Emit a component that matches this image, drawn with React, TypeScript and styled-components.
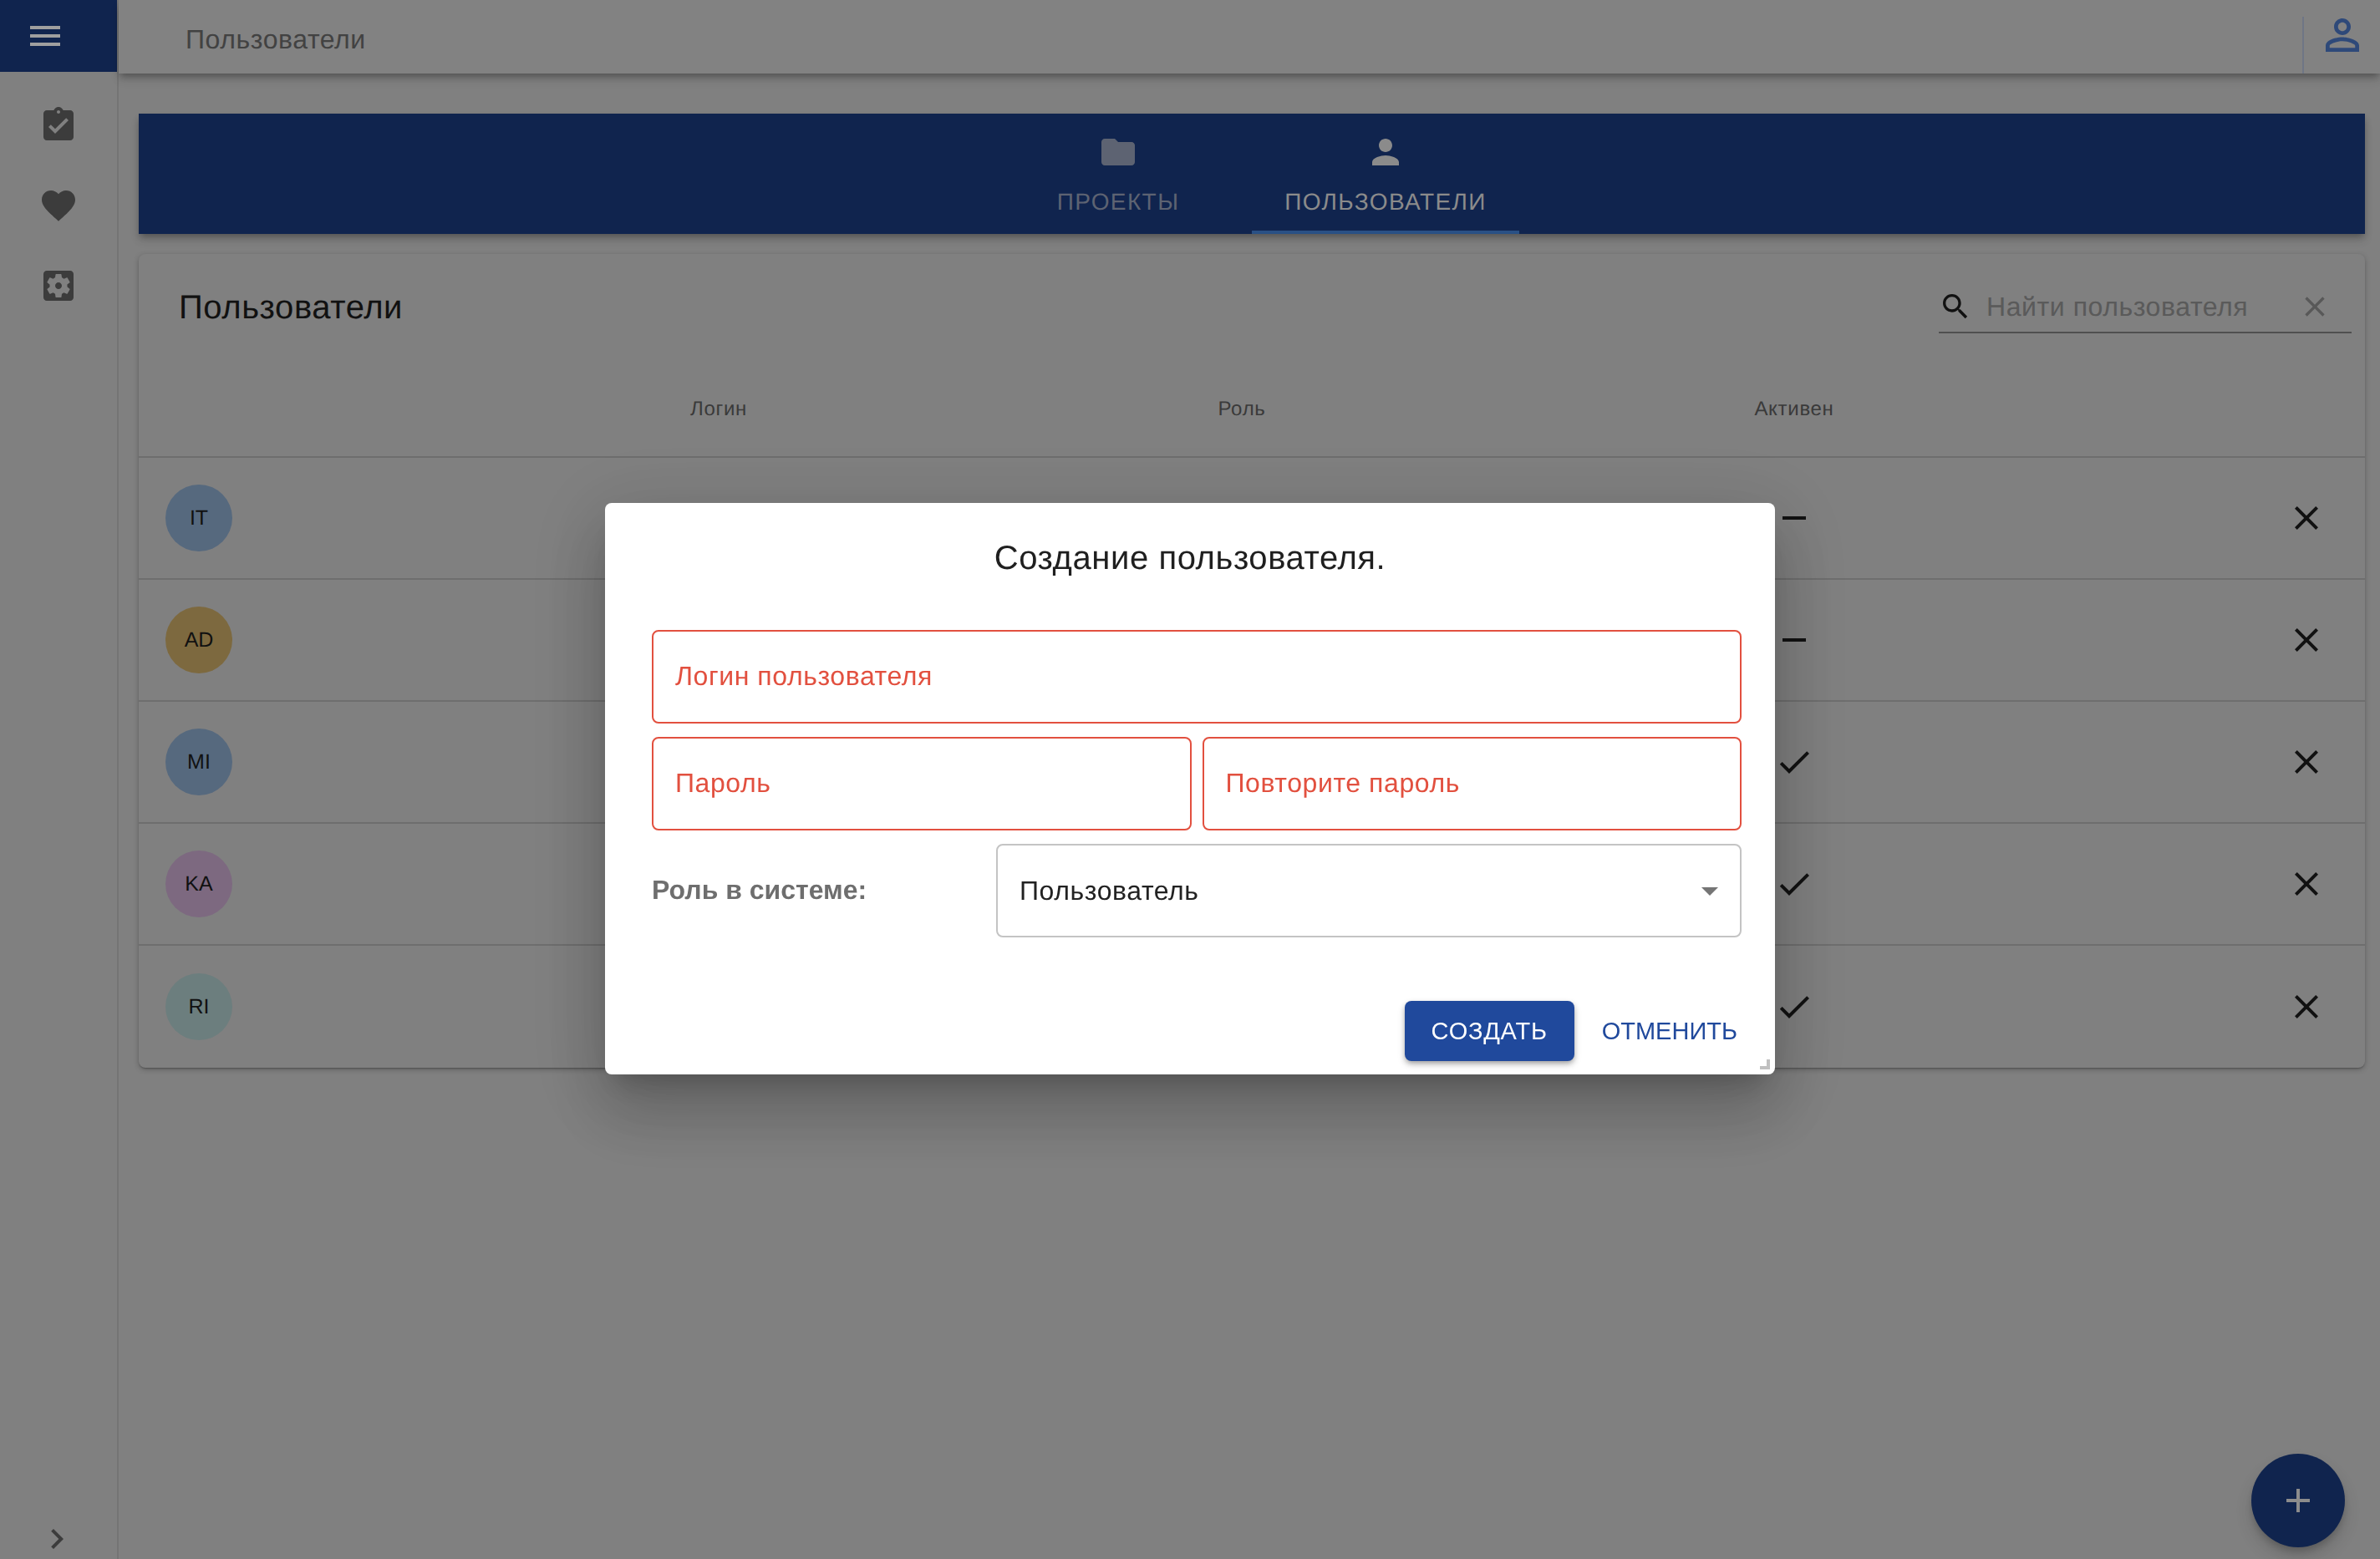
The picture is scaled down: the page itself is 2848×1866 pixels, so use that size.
import React from "react"
import styled, { createGlobalStyle } from "styled-components"

const GlobalStyle = createGlobalStyle`
  html, body {
    margin: 0;
    padding: 0;
    height: 100%;
    overflow: hidden;
    background: #cdcdcd;
    font-family: "Liberation Sans", Arial, sans-serif;
    letter-spacing: 0.036em;
    text-rendering: geometricPrecision;
  }
  * {
    box-sizing: border-box;
  }
`

const PRIMARY = "#1a3a7e"

const Page = styled.div`
  display: flex;
  width: 100vw;
  height: 100vh;
  background: #cdcdcd;
`

const Sidebar = styled.aside`
  display: flex;
  flex-direction: column;
  flex: 0 0 142px;
  height: 100%;
  border-right: 2px solid #bababa;
`

const SidebarHead = styled.div`
  display: flex;
  align-items: center;
  height: 86px;
  padding-left: 30px;
  background: ${PRIMARY};
`

const SideNav = styled.nav`
  display: flex;
  flex-direction: column;
  flex: 1;
  padding-top: 16px;
`

const SideItem = styled.div`
  display: flex;
  align-items: center;
  justify-content: center;
  height: 96px;
`

const SideToggle = styled.div`
  display: flex;
  justify-content: center;
  padding-right: 4px;
`

const Icon = styled.svg<{ $size?: number; $color?: string }>`
  display: block;
  flex: none;
  width: ${(p) => p.$size ?? 48}px;
  height: ${(p) => p.$size ?? 48}px;
  fill: ${(p) => p.$color ?? "#606060"};
`

const Main = styled.main`
  display: flex;
  flex-direction: column;
  flex: 1;
  min-width: 0;
`

const TopBar = styled.header`
  display: flex;
  align-items: center;
  justify-content: space-between;
  height: 88px;
  padding-left: 80px;
  background: #d0d0d0;
  box-shadow: 0 4px 8px -2px rgba(0, 0, 0, 0.3), 0 8px 10px 0 rgba(0, 0, 0, 0.12);
`

const TopTitle = styled.div`
  padding-top: 6px;
  font-size: 32px;
  color: #6b6b6b;
`

const TopUser = styled.div`
  display: flex;
  align-self: stretch;
  align-items: flex-start;
  width: 93px;
  margin-top: 20px;
  padding-left: 16px;
  border-left: 2px solid #b2bed6;
  & > svg {
    margin-top: -8px;
  }
`

const Content = styled.div`
  display: flex;
  flex-direction: column;
  gap: 24px;
  padding: 48px 18px 0 24px;
`

const TabBar = styled.div`
  display: flex;
  justify-content: center;
  height: 144px;
  background: ${PRIMARY};
  box-shadow: 0 4px 8px -2px rgba(0, 0, 0, 0.3), 0 8px 10px 0 rgba(0, 0, 0, 0.12);
`

const Tab = styled.div<{ $active?: boolean }>`
  display: flex;
  flex-direction: column;
  align-items: center;
  width: 320px;
  padding-top: 22px;
  font-size: 28px;
  letter-spacing: 1.4px;
  color: ${(p) => (p.$active ? "#dfdfdf" : "#959fb7")};
  border-bottom: 4px solid ${(p) => (p.$active ? "#4380d5" : "transparent")};
`

const TabLabel = styled.span`
  margin-top: 20px;
`

const Card = styled.section`
  border-radius: 8px;
  background: #cdcdcd;
  box-shadow: 0 2px 2px -1px rgba(0, 0, 0, 0.25), 0 2px 6px 0 rgba(0, 0, 0, 0.25);
`

const CardHead = styled.div`
  display: flex;
  align-items: center;
  justify-content: space-between;
  height: 128px;
  padding: 0 16px 0 48px;
`

const CardTitle = styled.h2`
  margin: 0;
  font-size: 40px;
  font-weight: 400;
  color: #1c1c1c;
`

const Search = styled.div`
  display: flex;
  align-items: center;
  width: 494px;
  height: 62px;
  border-bottom: 2px solid #808080;
`

const SearchText = styled.span`
  flex: 1;
  margin-left: 17px;
  font-size: 32px;
  color: #909090;
`

const ClearSlot = styled.span`
  margin-right: 24px;
`

const tableColumns = "400px 588px 664px 658px 1fr 141px"

const HeadRow = styled.div`
  display: grid;
  grid-template-columns: ${tableColumns};
  align-items: center;
  height: 116px;
  border-bottom: 2px solid #b0b0b0;
`

const HeadCell = styled.div<{ $col: number }>`
  grid-column: ${(p) => p.$col};
  padding-top: 2px;
  text-align: center;
  font-size: 24px;
  letter-spacing: 0.7px;
  color: #5d5d5d;
`

const Row = styled.div`
  display: grid;
  grid-template-columns: ${tableColumns};
  align-items: center;
  height: 146px;
  border-bottom: 2px solid #b0b0b0;
  &:last-child {
    border-bottom: 0;
  }
`

const AvatarCell = styled.div`
  grid-column: 1;
  padding-left: 32px;
`

const Avatar = styled.div<{ $bg: string }>`
  display: flex;
  align-items: center;
  justify-content: center;
  width: 80px;
  height: 80px;
  border-radius: 50%;
  background: ${(p) => p.$bg};
  font-size: 25px;
  letter-spacing: 0;
  color: #1c1c1c;
`

const IconCell = styled.div<{ $col: number }>`
  grid-column: ${(p) => p.$col};
  display: flex;
  justify-content: center;
`

const Fab = styled.div`
  position: fixed;
  right: 42px;
  bottom: 14px;
  display: flex;
  align-items: center;
  justify-content: center;
  width: 112px;
  height: 112px;
  border-radius: 50%;
  background: ${PRIMARY};
  box-shadow: 0 6px 10px -2px rgba(0, 0, 0, 0.2), 0 12px 20px 0 rgba(0, 0, 0, 0.14);
`

const Backdrop = styled.div`
  position: fixed;
  inset: 0;
  display: flex;
  align-items: center;
  justify-content: center;
  padding-top: 22px;
  background: rgba(0, 0, 0, 0.375);
`

const Dialog = styled.div`
  position: relative;
  width: 1400px;
  border-radius: 8px;
  background: #fff;
  box-shadow: 0 22px 30px -14px rgba(0, 0, 0, 0.2), 0 48px 76px 6px rgba(0, 0, 0, 0.14),
    0 18px 92px 16px rgba(0, 0, 0, 0.12);
`

const DialogTitle = styled.h3`
  margin: 0;
  padding-top: 42px;
  font-size: 40px;
  line-height: 48px;
  font-weight: 400;
  text-align: center;
  color: #1f1f1f;
`

const Form = styled.div`
  display: flex;
  flex-direction: column;
  gap: 16px;
  padding: 62px 40px 0 56px;
`

const FieldRow = styled.div`
  display: flex;
  gap: 13px;
  & > * {
    flex: 1;
  }
`

const Field = styled.div<{ $error?: boolean }>`
  display: flex;
  align-items: center;
  justify-content: space-between;
  height: 112px;
  padding: 0 12px ${(p) => (p.$error ? 2 : 0)}px 26px;
  border: 2px solid ${(p) => (p.$error ? "#e2503f" : "#c4c4c4")};
  border-radius: 8px;
  font-size: 32px;
  color: ${(p) => (p.$error ? "#e2503f" : "#222")};
`

const RoleRow = styled.div`
  display: grid;
  grid-template-columns: 412px 1fr;
  align-items: center;
`

const RoleLabel = styled.label`
  padding-bottom: 2px;
  font-size: 32px;
  font-weight: 700;
  letter-spacing: 0;
  color: #6e6e6e;
`

const Actions = styled.div`
  display: flex;
  justify-content: flex-end;
  gap: 17px;
  padding: 76px 29px 16px 0;
`

const Button = styled.button<{ $primary?: boolean }>`
  height: 72px;
  padding: 0 ${(p) => (p.$primary ? 32 : 16)}px;
  border: 0;
  border-radius: 8px;
  font-family: inherit;
  font-size: 29px;
  letter-spacing: ${(p) => (p.$primary ? 0.75 : 0)}px;
  color: ${(p) => (p.$primary ? "#fff" : "#20499c")};
  background: ${(p) => (p.$primary ? "#20499c" : "transparent")};
  box-shadow: ${(p) => (p.$primary ? "0 3px 6px -1px rgba(0,0,0,.3), 0 4px 10px 0 rgba(0,0,0,.16)" : "none")};
`

const ResizeHandle = styled.span`
  position: absolute;
  right: 6px;
  bottom: 6px;
  width: 12px;
  height: 12px;
  border-right: 4px solid #c0c0c0;
  border-bottom: 4px solid #c0c0c0;
`

const paths = {
  menu: "M3 18h18v-2H3v2zm0-5h18v-2H3v2zm0-7v2h18V6H3z",
  assignment:
    "M19 3h-4.18C14.4 1.84 13.3 1 12 1c-1.3 0-2.4.84-2.82 2H5c-1.1 0-2 .9-2 2v14c0 1.1.9 2 2 2h14c1.1 0 2-.9 2-2V5c0-1.1-.9-2-2-2zm-7 0c.55 0 1 .45 1 1s-.45 1-1 1-1-.45-1-1 .45-1 1-1zm-2 14l-4-4 1.41-1.41L10 14.17l6.59-6.59L18 9l-8 8z",
  favorite:
    "M12 21.35l-1.45-1.32C5.4 15.36 2 12.28 2 8.5 2 5.42 4.42 3 7.5 3c1.74 0 3.41.81 4.5 2.09C13.09 3.81 14.76 3 16.5 3 19.58 3 22 5.42 22 8.5c0 3.78-3.4 6.86-8.55 11.54L12 21.35z",
  settings:
    "M12 10c-1.1 0-2 .9-2 2s.9 2 2 2 2-.9 2-2-.9-2-2-2zm7-7H5c-1.11 0-2 .9-2 2v14c0 1.1.89 2 2 2h14c1.11 0 2-.9 2-2V5c0-1.1-.89-2-2-2zm-1.75 9c0 .23-.02.46-.05.68l1.48 1.16c.13.11.17.3.08.45l-1.4 2.42c-.09.15-.27.21-.43.15l-1.74-.7c-.36.28-.76.51-1.18.69l-.26 1.85c-.03.17-.18.3-.35.3h-2.8c-.17 0-.32-.13-.35-.29l-.26-1.85c-.43-.18-.82-.41-1.18-.69l-1.74.7c-.16.06-.34 0-.43-.15l-1.4-2.42c-.09-.15-.05-.34.08-.45l1.48-1.16c-.03-.23-.05-.46-.05-.69 0-.23.02-.46.05-.68l-1.48-1.16c-.13-.11-.17-.3-.08-.45l1.4-2.42c.09-.15.27-.21.43-.15l1.74.7c.36-.28.76-.51 1.18-.69l.26-1.85c.03-.17.18-.3.35-.3h2.8c.17 0 .32.13.35.29l.26 1.85c.43.18.82.41 1.18.69l1.74-.7c.16-.06.34 0 .43.15l1.4 2.42c.09.15.05.34-.08.45l-1.48 1.16c.03.23.05.46.05.69z",
  chevron: "M10 6L8.59 7.41 13.17 12l-4.58 4.59L10 18l6-6z",
  folder: "M10 4H4c-1.1 0-1.99.9-1.99 2L2 18c0 1.1.9 2 2 2h16c1.1 0 2-.9 2-2V8c0-1.1-.9-2-2-2h-8l-2-2z",
  person: "M12 12c2.21 0 4-1.79 4-4s-1.79-4-4-4-4 1.79-4 4 1.79 4 4 4zm0 2c-2.67 0-8 1.34-8 4v2h16v-2c0-2.66-5.33-4-8-4z",
  personOutline:
    "M12 5.9c1.16 0 2.1.94 2.1 2.1s-.94 2.1-2.1 2.1S9.9 9.16 9.9 8s.94-2.1 2.1-2.1m0 9c2.97 0 6.1 1.46 6.1 2.1v1.1H5.9V17c0-.64 3.13-2.1 6.1-2.1M12 4C9.79 4 8 5.79 8 8s1.79 4 4 4 4-1.79 4-4-1.79-4-4-4zm0 9c-2.67 0-8 1.34-8 4v3h16v-3c0-2.66-5.33-4-8-4z",
  search:
    "M15.5 14h-.79l-.28-.27C15.41 12.59 16 11.11 16 9.5 16 5.91 13.09 3 9.5 3S3 5.91 3 9.5 5.91 16 9.5 16c1.61 0 3.09-.59 4.23-1.57l.27.28v.79l5 4.99L20.49 19l-4.99-5zm-6 0C7.01 14 5 11.99 5 9.5S7.01 5 9.5 5 14 7.01 14 9.5 11.99 14 9.5 14z",
  clear: "M19 6.41L17.59 5 12 10.59 6.41 5 5 6.41 10.59 12 5 17.59 6.41 19 12 13.41 17.59 19 19 17.59 13.41 12z",
  check: "M9 16.17L4.83 12l-1.42 1.41L9 19 21 7l-1.41-1.41z",
  remove: "M19 13H5v-2h14v2z",
  arrow: "M7 10l5 5 5-5z",
  add: "M19 13h-6v6h-2v-6H5v-2h6V5h2v6h6v2z",
}

const MuiIcon: React.FC<{ name: keyof typeof paths; size?: number; color?: string }> = ({ name, size, color }) => (
  <Icon viewBox="0 0 24 24" $size={size} $color={color}>
    <path d={paths[name]} />
  </Icon>
)

const users = [
  { initials: "IT", color: "#8aa8cb", active: false },
  { initials: "AD", color: "#c9a965", active: false },
  { initials: "MI", color: "#8aa8cb", active: true },
  { initials: "KA", color: "#c8a9cd", active: true },
  { initials: "RI", color: "#adcaca", active: true },
]

export default function App() {
  return (
    <Page>
      <GlobalStyle />
      <Sidebar>
        <SidebarHead>
          <MuiIcon name="menu" color="#ffffff" />
        </SidebarHead>
        <SideNav>
          <SideItem>
            <MuiIcon name="assignment" />
          </SideItem>
          <SideItem>
            <MuiIcon name="favorite" />
          </SideItem>
          <SideItem>
            <MuiIcon name="settings" />
          </SideItem>
        </SideNav>
        <SideToggle>
          <MuiIcon name="chevron" />
        </SideToggle>
      </Sidebar>

      <Main>
        <TopBar>
          <TopTitle>Пользователи</TopTitle>
          <TopUser>
            <MuiIcon name="personOutline" size={60} color="#4b76c3" />
          </TopUser>
        </TopBar>

        <Content>
          <TabBar>
            <Tab>
              <MuiIcon name="folder" color="#959fb7" />
              <TabLabel>ПРОЕКТЫ</TabLabel>
            </Tab>
            <Tab $active>
              <MuiIcon name="person" color="#dfdfdf" />
              <TabLabel>ПОЛЬЗОВАТЕЛИ</TabLabel>
            </Tab>
          </TabBar>

          <Card>
            <CardHead>
              <CardTitle>Пользователи</CardTitle>
              <Search>
                <MuiIcon name="search" size={40} color="#1c1c1c" />
                <SearchText>Найти пользователя</SearchText>
                <ClearSlot>
                  <MuiIcon name="clear" size={40} color="#8d8d8d" />
                </ClearSlot>
              </Search>
            </CardHead>
            <HeadRow>
              <HeadCell $col={2}>Логин</HeadCell>
              <HeadCell $col={3}>Роль</HeadCell>
              <HeadCell $col={4}>Активен</HeadCell>
            </HeadRow>
            {users.map((user) => (
              <Row key={user.initials}>
                <AvatarCell>
                  <Avatar $bg={user.color}>{user.initials}</Avatar>
                </AvatarCell>
                <IconCell $col={4}>
                  <MuiIcon name={user.active ? "check" : "remove"} color="#1c1c1c" />
                </IconCell>
                <IconCell $col={6}>
                  <MuiIcon name="clear" color="#1c1c1c" />
                </IconCell>
              </Row>
            ))}
          </Card>
        </Content>
      </Main>

      <Fab>
        <MuiIcon name="add" color="#e0e0e0" />
      </Fab>

      <Backdrop>
        <Dialog>
          <DialogTitle>Создание пользователя.</DialogTitle>
          <Form>
            <Field $error>Логин пользователя</Field>
            <FieldRow>
              <Field $error>Пароль</Field>
              <Field $error>Повторите пароль</Field>
            </FieldRow>
            <RoleRow>
              <RoleLabel>Роль в системе:</RoleLabel>
              <Field>
                Пользователь
                <MuiIcon name="arrow" color="#757575" />
              </Field>
            </RoleRow>
          </Form>
          <Actions>
            <Button $primary>СОЗДАТЬ</Button>
            <Button>ОТМЕНИТЬ</Button>
          </Actions>
          <ResizeHandle />
        </Dialog>
      </Backdrop>
    </Page>
  )
}
